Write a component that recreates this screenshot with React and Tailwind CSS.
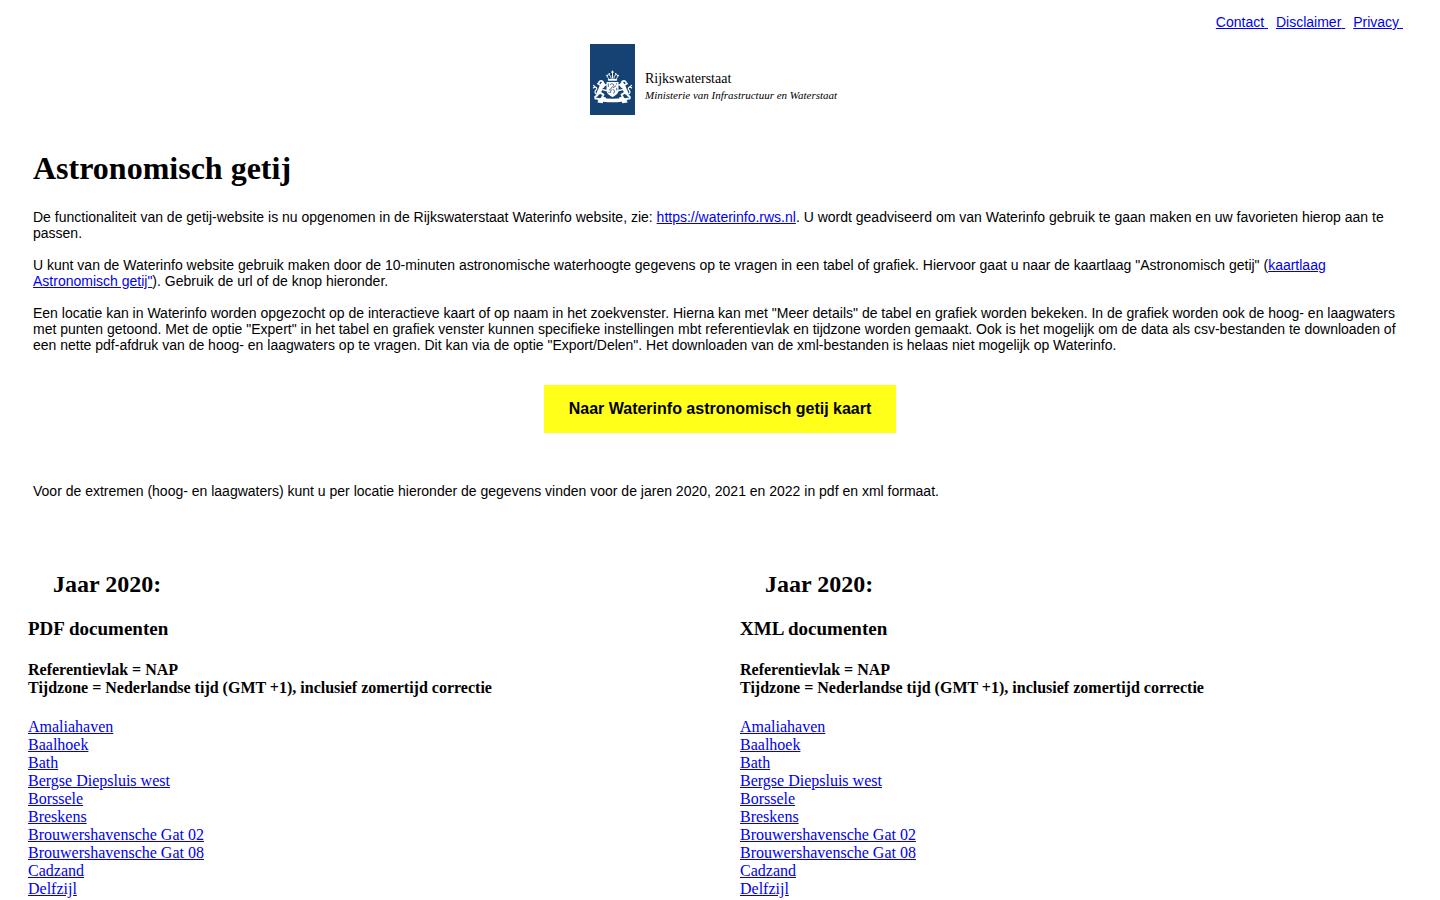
import React from 'react';

const locations = [
  'Amaliahaven',
  'Baalhoek',
  'Bath',
  'Bergse Diepsluis west',
  'Borssele',
  'Breskens',
  'Brouwershavensche Gat 02',
  'Brouwershavensche Gat 08',
  'Cadzand',
  'Delfzijl',
];

function Lion() {
  return (
    <g fill="none" stroke="#fff" strokeLinecap="round" strokeLinejoin="round">
      <path d="M12.8 37.4c-1.8-1.1-3.8-.2-3.9 1.4l-1 .9 1.8.8 1.4 1.3" strokeWidth="1.6" />
      <path d="M12.6 38.2l1.6 2.4-1 2.2" strokeWidth="2.2" />
      <path d="M12.3 40.9c-1.8 2.6-1.8 5.3-3.6 7.6" strokeWidth="3.9" />
      <path d="M12.5 42.5l3.8-1.8M12.6 45.6l3.6.9" strokeWidth="1.4" />
      <path d="M9.6 48.4l3.8 2.2-1.4 3.2 3 .4" strokeWidth="2" />
      <path d="M8.2 48.6l-.8 2.6-2.2 1.6.2 1.8h2.6" strokeWidth="1.9" />
      <path d="M7.6 50.3c-2.8-.4-3.3-2.6-1.8-4s1.2-2.6-.4-3.3l-1.9-1.6M5.4 43l-2 .9" strokeWidth="1.2" />
    </g>
  );
}

function Emblem() {
  return (
    <svg viewBox="0 0 45 71" className="h-[71px] w-[45px] shrink-0 bg-[#154273]" aria-hidden="true">
      <Lion />
      <g transform="matrix(-1 0 0 1 45 0)">
        <Lion />
      </g>
      <g fill="none" stroke="#fff" strokeWidth="1" strokeLinecap="round">
        <path d="M22.5 27v3M21.4 28.1h2.2" />
        <path d="M18.7 34.6c-2.6-2.4-1.6-4.4.4-3.8 1.4.4 1.8 2 2 3.6M26.3 34.6c2.6-2.4 1.6-4.4-.4-3.8-1.4.4-1.8 2-2 3.6M22.5 30v4.2" />
        <path d="M18.6 35.8h7.8" strokeWidth="1.7" />
      </g>
      <g fill="#fff">
        <circle cx="17" cy="31.6" r=".8" />
        <circle cx="28" cy="31.6" r=".8" />
        <circle cx="19.3" cy="29.8" r=".8" />
        <circle cx="25.7" cy="29.8" r=".8" />
        <path d="M16.5 38h12v8.2c0 3.3-2.9 5.2-6 6.8-3.1-1.6-6-3.5-6-6.8z" />
        <path d="M6.8 54.8l4.6-1c7 1.3 15.2 1.3 22.2 0l4.6 1-1.5 1.9 1 1.9-5.5.7-.3-1.6c-6.2.8-12.6.8-18.8 0l-.3 1.6-5.5-.7 1-1.9z" />
      </g>
      <g fill="none" stroke="#154273" strokeWidth=".8" strokeLinecap="round">
        <path d="M20.3 40.3c1.5-1.2 3.6-.4 3.4 1.1-.2 1.3-2.4 1.4-2.5 3.2l-2 1.4M23.4 43.6l2.4-1.7M23 45.2l1.6 1.8-.8 2.2M21.2 46l-.9 2.6" />
        <path d="M18.3 39.9v2.6M26.4 39.5v.6M26.7 44.2v1.7M18.4 48l.6.6" />
      </g>
    </svg>
  );
}

function YearColumn({ kind }) {
  return (
    <section className="px-5">
      <h2 className="ml-[25px] text-2xl leading-7 font-bold">Jaar 2020:</h2>
      <h3 className="mt-[19px] text-[19px] leading-6 font-bold">{kind} documenten</h3>
      <h4 className="mt-5 text-base leading-[18px] font-bold">
        Referentievlak = NAP
        <br />
        Tijdzone = Nederlandse tijd (GMT +1), inclusief zomertijd correctie
      </h4>
      <ul className="mt-[21px] text-base leading-[18px]">
        {locations.map((name) => (
          <li key={name}>
            <a href="#" className="text-[#0000ee] underline">{name}</a>
          </li>
        ))}
      </ul>
    </section>
  );
}

export default function App() {
  return (
    <div className="bg-white px-2 pt-[14px] font-['Liberation_Serif',serif] text-black">
      <nav className="flex justify-end gap-2 pr-[29px] font-['Liberation_Sans',sans-serif] text-sm leading-4">
        {['Contact', 'Disclaimer', 'Privacy'].map((label) => (
          <a key={label} href="#" className="text-[#0000ee] underline">{label}&nbsp;</a>
        ))}
      </nav>

      <header className="mx-auto mt-[14px] flex w-[260px] gap-[10px]">
        <Emblem />
        <div className="pt-[27px] leading-4 whitespace-nowrap">
          <div className="text-[14px]">Rijkswaterstaat</div>
          <div className="text-[11px] italic">Ministerie van Infrastructuur en Waterstaat</div>
        </div>
      </header>

      <main>
        <div className="px-[25px]">
          <h1 className="mt-[35px] text-[32px] leading-9 font-bold">Astronomisch getij</h1>
          <div className="mt-[23px] flex flex-col gap-4 font-['Liberation_Sans',sans-serif] text-sm leading-4">
            <p>
              De functionaliteit van de getij-website is nu opgenomen in de Rijkswaterstaat Waterinfo website, zie:{' '}
              <a href="#" className="text-[#0000ee] underline">https://waterinfo.rws.nl</a>. U wordt geadviseerd om van
              Waterinfo gebruik te gaan maken en uw favorieten hierop aan te passen.
            </p>
            <p>
              U kunt van de Waterinfo website gebruik maken door de 10-minuten astronomische waterhoogte gegevens op te
              vragen in een tabel of grafiek. Hiervoor gaat u naar de kaartlaag "Astronomisch getij" (
              <a href="#" className="text-[#0000ee] underline">kaartlaag Astronomisch getij"</a>). Gebruik de url of de
              knop hieronder.
            </p>
            <p>
              Een locatie kan in Waterinfo worden opgezocht op de interactieve kaart of op naam in het zoekvenster.
              Hierna kan met "Meer details" de tabel en grafiek worden bekeken. In de grafiek worden ook de hoog- en
              laagwaters met punten getoond. Met de optie "Expert" in het tabel en grafiek venster kunnen specifieke
              instellingen mbt referentievlak en tijdzone worden gemaakt. Ook is het mogelijk om de data als
              csv-bestanden te downloaden of een nette pdf-afdruk van de hoog- en laagwaters op te vragen. Dit kan via
              de optie "Export/Delen". Het downloaden van de xml-bestanden is helaas niet mogelijk op Waterinfo.
            </p>
          </div>
          <div className="mt-8 flex justify-center">
            <button
              type="button"
              className="cursor-pointer bg-[#ffff1a] px-[25px] py-[15px] font-['Liberation_Sans',sans-serif] text-base leading-[18px] font-bold"
            >
              Naar Waterinfo astronomisch getij kaart
            </button>
          </div>
          <p className="mt-[50px] font-['Liberation_Sans',sans-serif] text-sm leading-4">
            Voor de extremen (hoog- en laagwaters) kunt u per locatie hieronder de gegevens vinden voor de jaren 2020,
            2021 en 2022 in pdf en xml formaat.
          </p>
        </div>
        <div className="mt-[71px] grid grid-cols-2">
          <YearColumn kind="PDF" />
          <YearColumn kind="XML" />
        </div>
      </main>
    </div>
  );
}
